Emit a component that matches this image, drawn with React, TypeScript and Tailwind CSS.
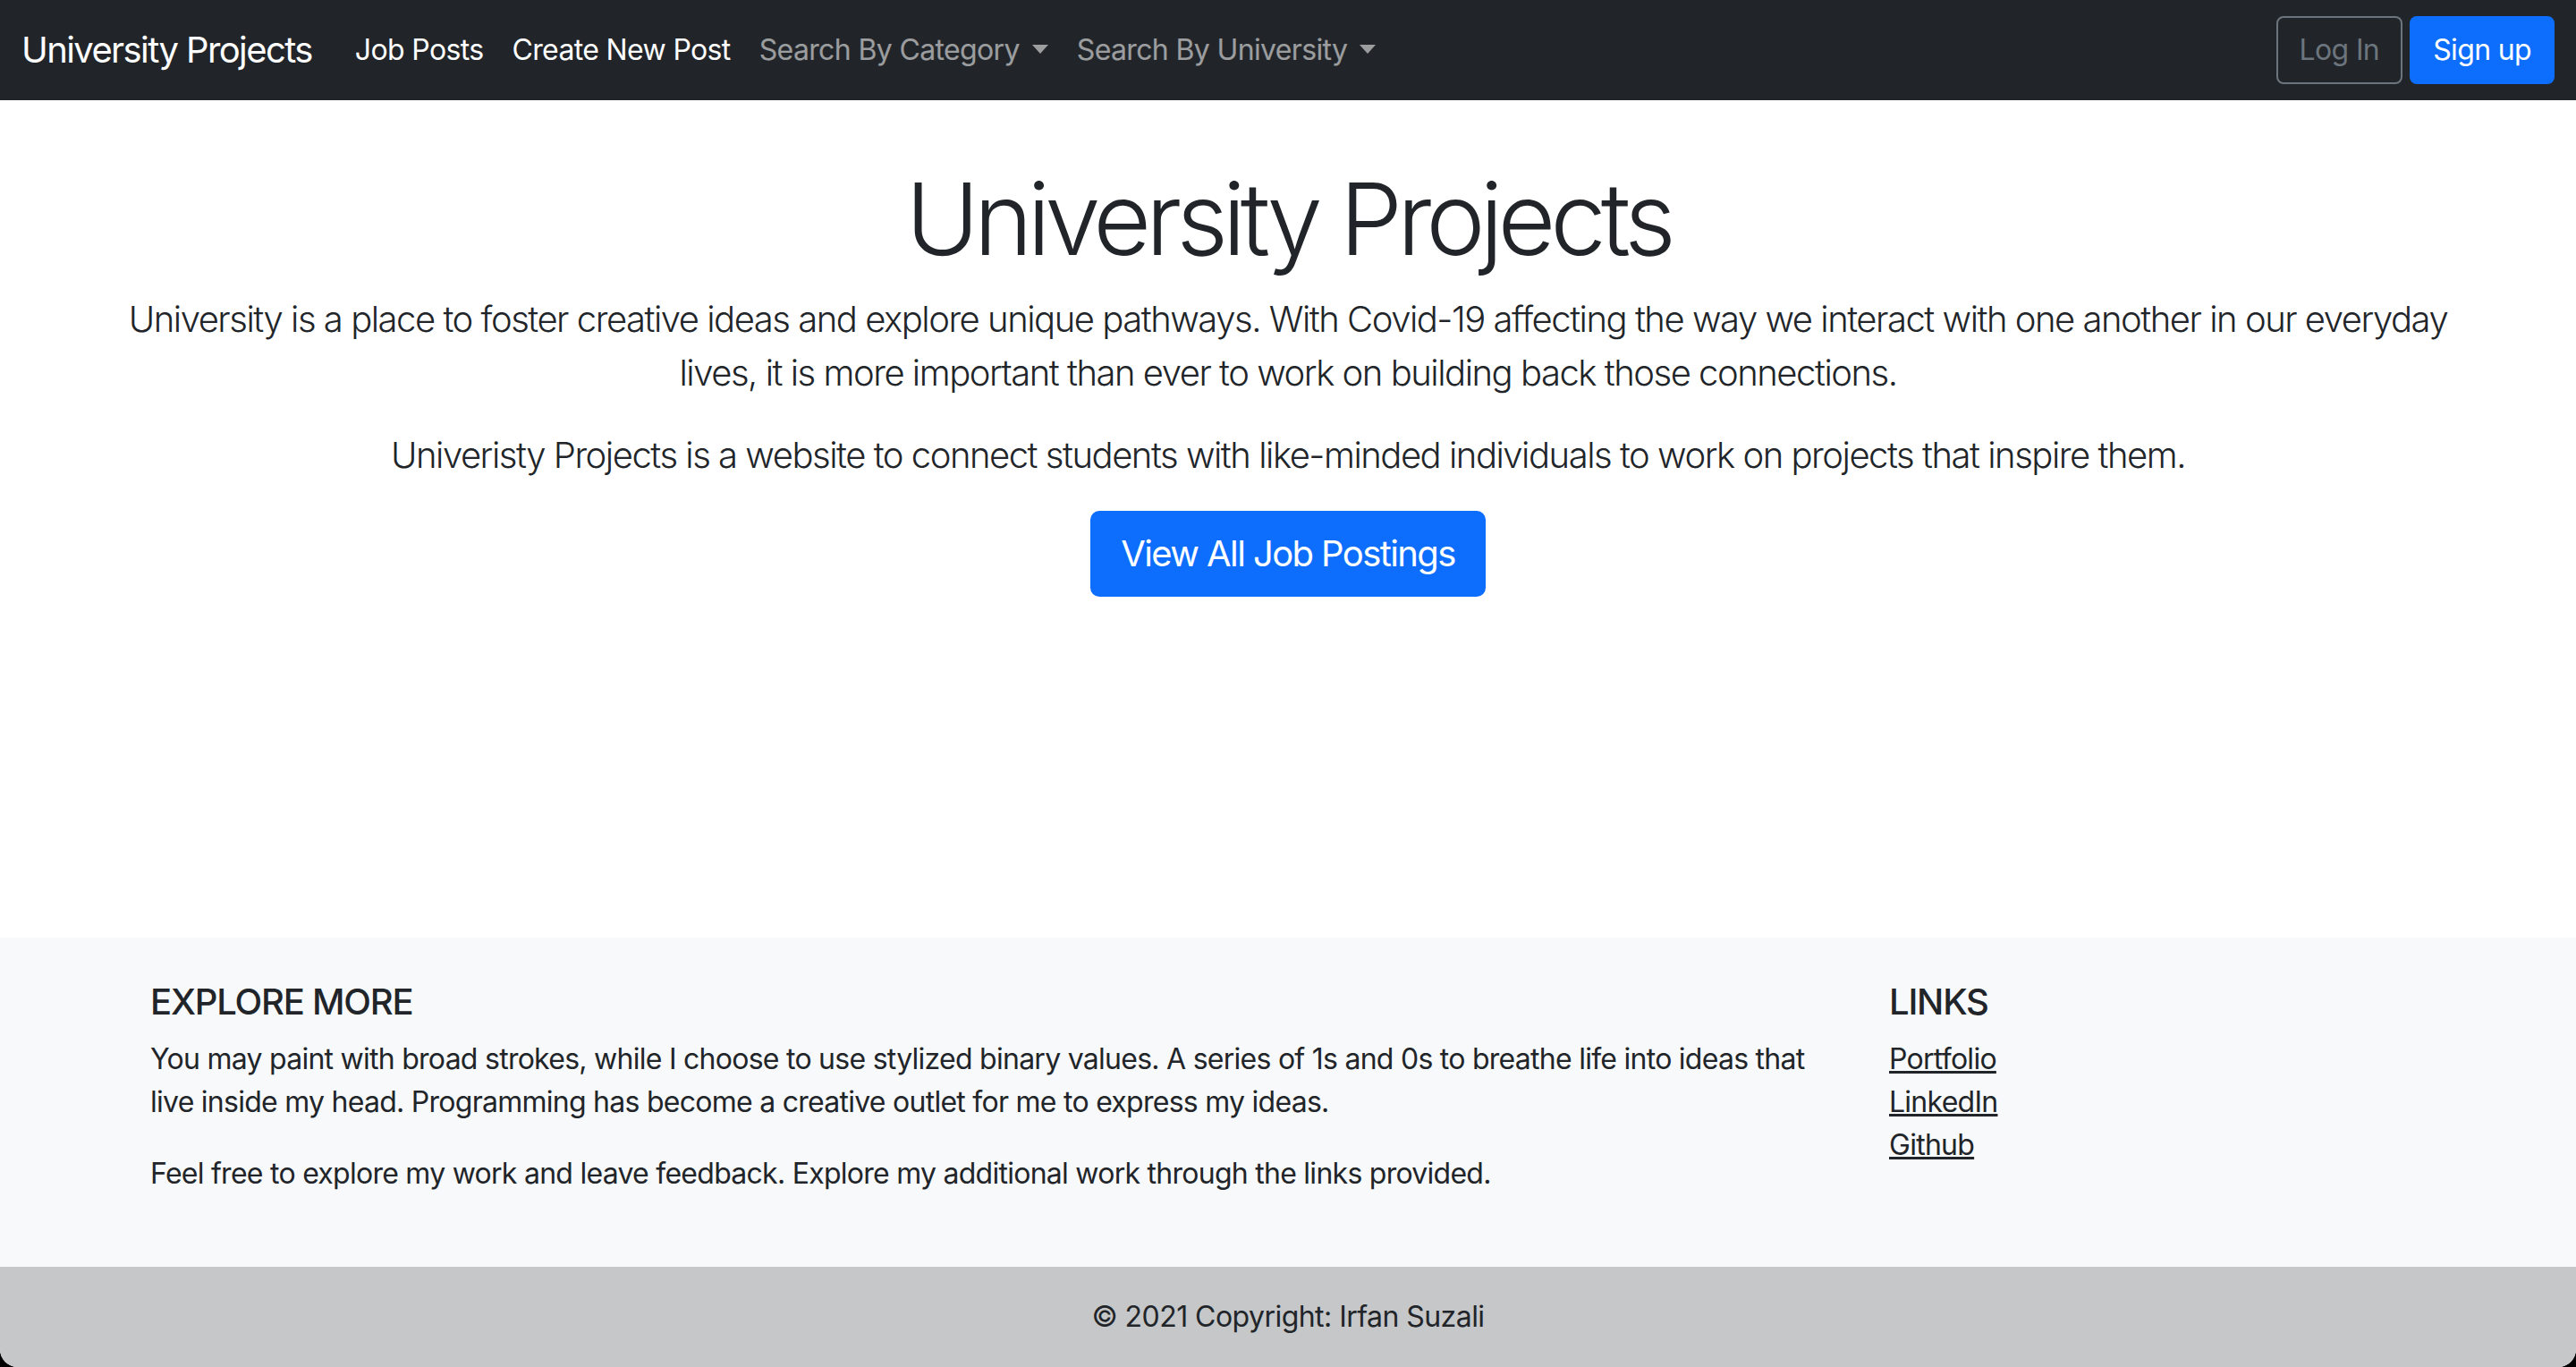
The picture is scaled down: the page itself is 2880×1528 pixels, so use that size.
const navLinks = ["Job Posts", "Create New Post"];

const dropdowns = ["Search By Category", "Search By University"];

function Caret() {
  return (
    <span className="ml-[14px] inline-block w-0 h-0 border-t-[10px] border-t-current border-x-[9px] border-x-transparent relative -top-[1px]" />
  );
}

function Navbar() {
  return (
    <nav className="h-[112px] bg-[#212529] px-[24px] flex items-center">
      <a href="#" className="text-white text-[40px] leading-[60px] tracking-[-0.04em] mr-[32px]">
        University Projects
      </a>
      <ul className="flex items-center">
        {navLinks.map((l) => (
          <li key={l}>
            <a href="#" className="block px-[16px] text-[32px] leading-[48px] tracking-[-0.02em] text-white">
              {l}
            </a>
          </li>
        ))}
        {dropdowns.map((d) => (
          <li key={d}>
            <a
              href="#"
              className="flex items-center px-[16px] text-[32px] leading-[48px] tracking-[-0.02em] text-white/55"
            >
              {d}
              <Caret />
            </a>
          </li>
        ))}
      </ul>
      <div className="ml-auto flex items-center gap-[8px]">
        <button className="border-2 border-[#6c757d] text-[#6c757d] text-[32px] leading-[48px] tracking-[-0.02em] px-[24px] py-[12px] rounded-[8px]">
          Log In
        </button>
        <button className="border-2 border-[#0d6efd] bg-[#0d6efd] text-white text-[32px] leading-[48px] tracking-[-0.02em] px-[24px] py-[12px] rounded-[8px]">
          Sign up
        </button>
      </div>
    </nav>
  );
}

function Hero() {
  return (
    <section className="w-[2680px] mx-auto px-[24px] pt-[65px] text-center text-[#212529]">
      <h1 className="text-[112px] font-light leading-[1.2] tracking-[-0.055em] mb-[16px]">University Projects</h1>
      <p className="text-[40px] font-light leading-[60px] tracking-[-0.037em] mb-[32px]">
        University is a place to foster creative ideas and explore unique pathways. With Covid-19
        affecting the way we interact with one another in our everyday lives, it is more important
        than ever to work on building back those connections.
      </p>
      <p className="text-[40px] font-light leading-[60px] tracking-[-0.037em] mb-[32px]">
        Univeristy Projects is a website to connect students with like-minded individuals to work on
        projects that inspire them.
      </p>
      <a
        href="#"
        className="inline-block border-2 border-[#0d6efd] bg-[#0d6efd] text-white text-[40px] leading-[60px] tracking-[-0.04em] px-[32px] py-[16px] rounded-[10px]"
      >
        View All Job Postings
      </a>
    </section>
  );
}

function Footer() {
  return (
    <footer className="bg-[#f8f9fa] text-[#212529]">
      <div className="w-[2640px] mx-auto p-[48px] flex gap-[48px]">
        <div className="w-[1896px]">
          <h5 className="text-[40px] font-medium leading-[48px] tracking-[-0.03em] mb-[16px] uppercase">
            Explore More
          </h5>
          <p className="text-[32px] leading-[48px] tracking-[-0.023em] mb-[32px]">
            You may paint with broad strokes, while I choose to use stylized binary values. A series
            of 1s and 0s to breathe life into ideas that live inside my head. Programming has become a
            creative outlet for me to express my ideas.
          </p>
          <p className="text-[32px] leading-[48px] tracking-[-0.023em] mb-[32px]">
            Feel free to explore my work and leave feedback. Explore my additional work through the
            links provided.
          </p>
        </div>
        <div className="flex-1">
          <h5 className="text-[40px] font-medium leading-[48px] tracking-[-0.03em] mb-[16px] uppercase">Links</h5>
          <ul className="text-[32px] leading-[48px] tracking-[-0.023em]">
            {["Portfolio", "LinkedIn", "Github"].map((l) => (
              <li key={l}>
                <a href="#" className="underline text-[#212529]">
                  {l}
                </a>
              </li>
            ))}
          </ul>
        </div>
      </div>
      <div className="bg-black/20 p-[32px] text-center text-[32px] leading-[48px] tracking-[-0.017em]">
        © 2021 Copyright: Irfan Suzali
      </div>
    </footer>
  );
}

export default function App() {
  return (
    <div className="bg-black min-h-[1528px] flex flex-col" style={{ fontFamily: "Inter, 'Noto Sans', sans-serif" }}>
      <div className="flex-1 flex flex-col bg-white rounded-b-[20px] overflow-hidden">
        <Navbar />
        <main className="flex-1">
          <Hero />
        </main>
        <Footer />
      </div>
    </div>
  );
}
